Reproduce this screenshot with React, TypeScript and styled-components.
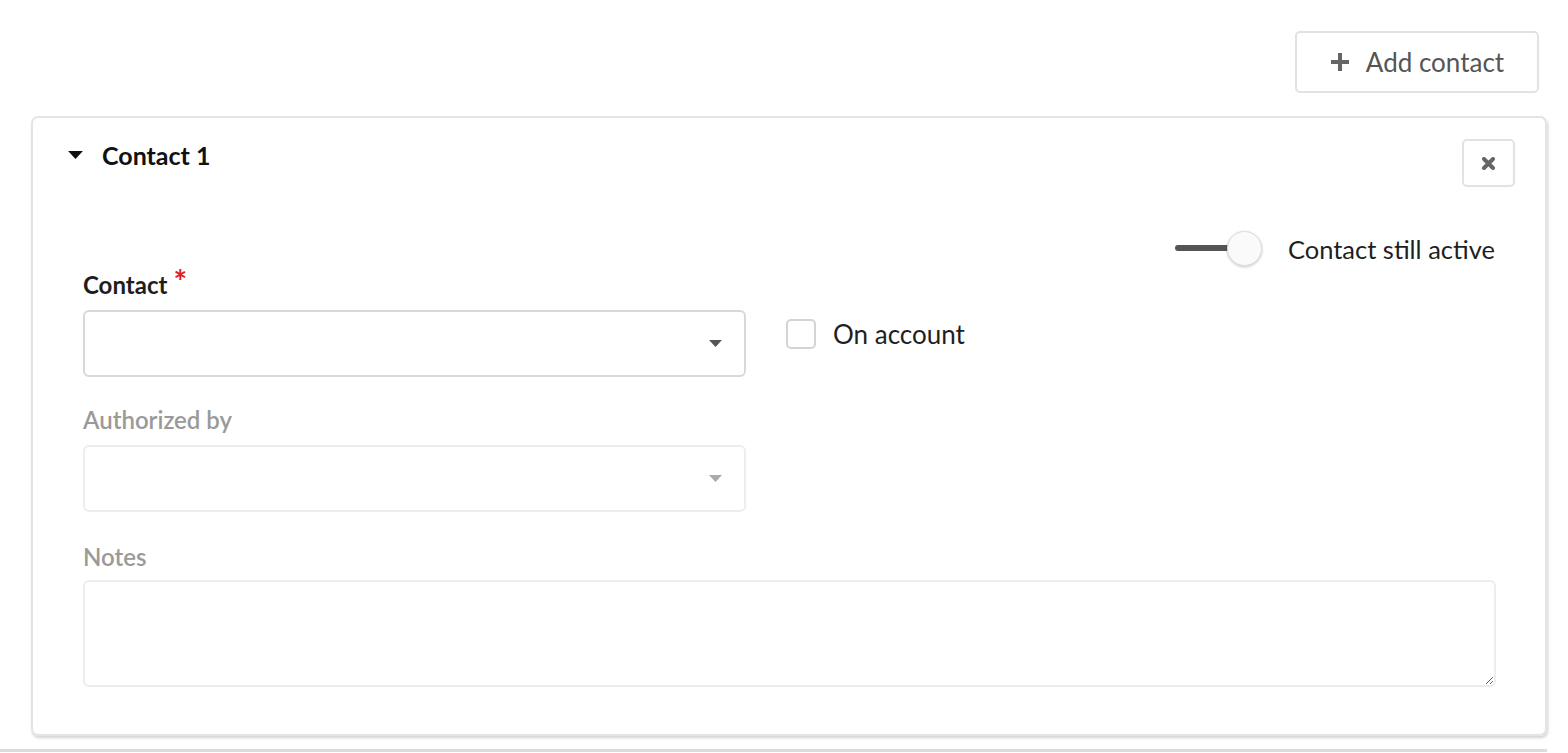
import React from "react";
import styled, { createGlobalStyle } from "styled-components";

const Global = createGlobalStyle`
  html, body { margin: 0; padding: 0; background: #fff; }
  body { font-family: Lato, "Open Sans", sans-serif; color: #1a1a1a; }
  * { box-sizing: border-box; }
`;

const Page = styled.div`
  padding-top: 31px;
  width: 1568px;
`;

const Toolbar = styled.div`
  display: flex;
  justify-content: flex-end;
  padding-right: 29px;
`;

const AddButton = styled.button`
  display: flex;
  align-items: center;
  justify-content: center;
  gap: 16px;
  width: 244px;
  height: 62px;
  background: #fff;
  border: 2px solid #e2e2e2;
  border-radius: 5px;
  font-family: inherit;
  font-size: 26px;
  color: #555;
  padding: 0;
  cursor: pointer;
`;

const Card = styled.section`
  margin: 23px 0 0 31px;
  width: 1516px;
  height: 620px;
  border: 2px solid #e4e4e4;
  border-radius: 7px;
  box-shadow: 1px 2px 3px rgba(0, 0, 0, 0.18);
  padding: 21px 30px 0 35px;
`;

const Header = styled.div`
  display: flex;
  align-items: flex-start;
  justify-content: space-between;
`;

const Title = styled.h2`
  display: flex;
  align-items: center;
  gap: 19px;
  margin: 1px 0 0 0;
  font-size: 25px;
  font-weight: 700;
  color: #111;
  line-height: 30px;
`;

const CloseButton = styled.button`
  width: 53px;
  height: 48px;
  background: #fff;
  border: 2px solid #e2e2e2;
  border-radius: 5px;
  display: flex;
  align-items: center;
  justify-content: center;
  padding: 0;
  cursor: pointer;
`;

const Body = styled.div`
  padding: 0 20px 0 15px;
`;

const SwitchRow = styled.div`
  display: flex;
  justify-content: flex-end;
  align-items: center;
  gap: 26px;
  margin-top: 44px;
  height: 36px;
`;

const SwitchTrack = styled.div`
  position: relative;
  width: 87px;
  height: 36px;
`;

const TrackBar = styled.div`
  position: absolute;
  left: 0;
  top: 14px;
  width: 68px;
  height: 6px;
  background: #555;
  border-radius: 3px;
`;

const Thumb = styled.div`
  position: absolute;
  right: 0;
  top: 0;
  width: 35px;
  height: 35px;
  border-radius: 50%;
  background: #fafafa;
  border: 1px solid #dcdcdc;
  box-shadow: 0 1px 3px rgba(0, 0, 0, 0.22);
`;

const SwitchLabel = styled.span`
  font-size: 25.5px;
  color: #1f1f1f;
`;

const FieldRow = styled.div`
  display: flex;
  align-items: flex-start;
  gap: 40px;
  margin-top: 3px;
`;

const Field = styled.div<{ $width?: string; $top?: number }>`
  display: flex;
  flex-direction: column;
  width: ${(p) => p.$width || "663px"};
  margin-top: ${(p) => p.$top ?? 0}px;
`;

const Label = styled.label<{ $muted?: boolean; $gap?: number }>`
  display: flex;
  align-items: flex-start;
  font-size: 24px;
  line-height: 30px;
  height: 30px;
  font-weight: ${(p) => (p.$muted ? 600 : 700)};
  color: ${(p) => (p.$muted ? "#9a9a9a" : "#1e1e1e")};
  margin-bottom: ${(p) => p.$gap ?? 10}px;
`;

const Required = styled.span`
  color: #e02020;
  margin-left: 6px;
  font-size: 32px;
  font-weight: 700;
  line-height: 30px;
  position: relative;
  top: -3px;
`;

const Select = styled.div<{ $muted?: boolean }>`
  height: 67px;
  border: 2px solid ${(p) => (p.$muted ? "#ededed" : "#d8d8d8")};
  border-radius: 6px;
  background: #fff;
  display: flex;
  align-items: center;
  justify-content: flex-end;
  padding-right: 22px;
`;

const CheckWrap = styled.label`
  display: flex;
  align-items: center;
  gap: 17px;
  margin-top: 48px;
  font-size: 26px;
  color: #1f1f1f;
`;

const CheckBox = styled.span`
  width: 30px;
  height: 30px;
  border: 2px solid #d4d4d4;
  border-radius: 5px;
  background: #fff;
`;

const TextArea = styled.textarea`
  height: 107px;
  width: 100%;
  border: 2px solid #ededed;
  border-radius: 6px;
  resize: vertical;
  font-family: inherit;
  font-size: 22px;
  outline: none;
`;

const BottomLine = styled.div`
  margin-top: 13px;
  width: 1547px;
  height: 3px;
  background: #dcdcdc;
`;

const Caret = ({ color, w = 13, h = 7 }: { color: string; w?: number; h?: number }) => (
  <svg width={w} height={h} viewBox="0 0 13 7">
    <path d="M0 0 H13 L6.5 7 Z" fill={color} />
  </svg>
);

export default function App() {
  return (
    <>
      <Global />
      <Page>
        <Toolbar>
          <AddButton>
            <svg width="20" height="20" viewBox="0 0 20 20">
              <path d="M10 1 V19 M1 10 H19" stroke="#666" strokeWidth="4" />
            </svg>
            Add contact
          </AddButton>
        </Toolbar>
        <Card>
          <Header>
            <Title>
              <Caret color="#111" w={15} h={8} />
              Contact 1
            </Title>
            <CloseButton aria-label="Remove">
              <svg width="13" height="13" viewBox="0 0 13 13">
                <path d="M2 2 L11 11 M11 2 L2 11" stroke="#666" strokeWidth="4" strokeLinecap="round" />
              </svg>
            </CloseButton>
          </Header>
          <Body>
            <SwitchRow>
              <SwitchTrack>
                <TrackBar />
                <Thumb />
              </SwitchTrack>
              <SwitchLabel>Contact still active</SwitchLabel>
            </SwitchRow>
            <FieldRow>
              <Field>
                <Label>
                  Contact<Required>*</Required>
                </Label>
                <Select>
                  <Caret color="#555" />
                </Select>
              </Field>
              <CheckWrap>
                <CheckBox />
                On account
              </CheckWrap>
            </FieldRow>
            <Field $top={28}>
              <Label $muted>Authorized by</Label>
              <Select $muted>
                <Caret color="#aaa" />
              </Select>
            </Field>
            <Field $width="1413px" $top={30}>
              <Label $muted $gap={8}>Notes</Label>
              <TextArea />
            </Field>
          </Body>
        </Card>
        <BottomLine />
      </Page>
    </>
  );
}
